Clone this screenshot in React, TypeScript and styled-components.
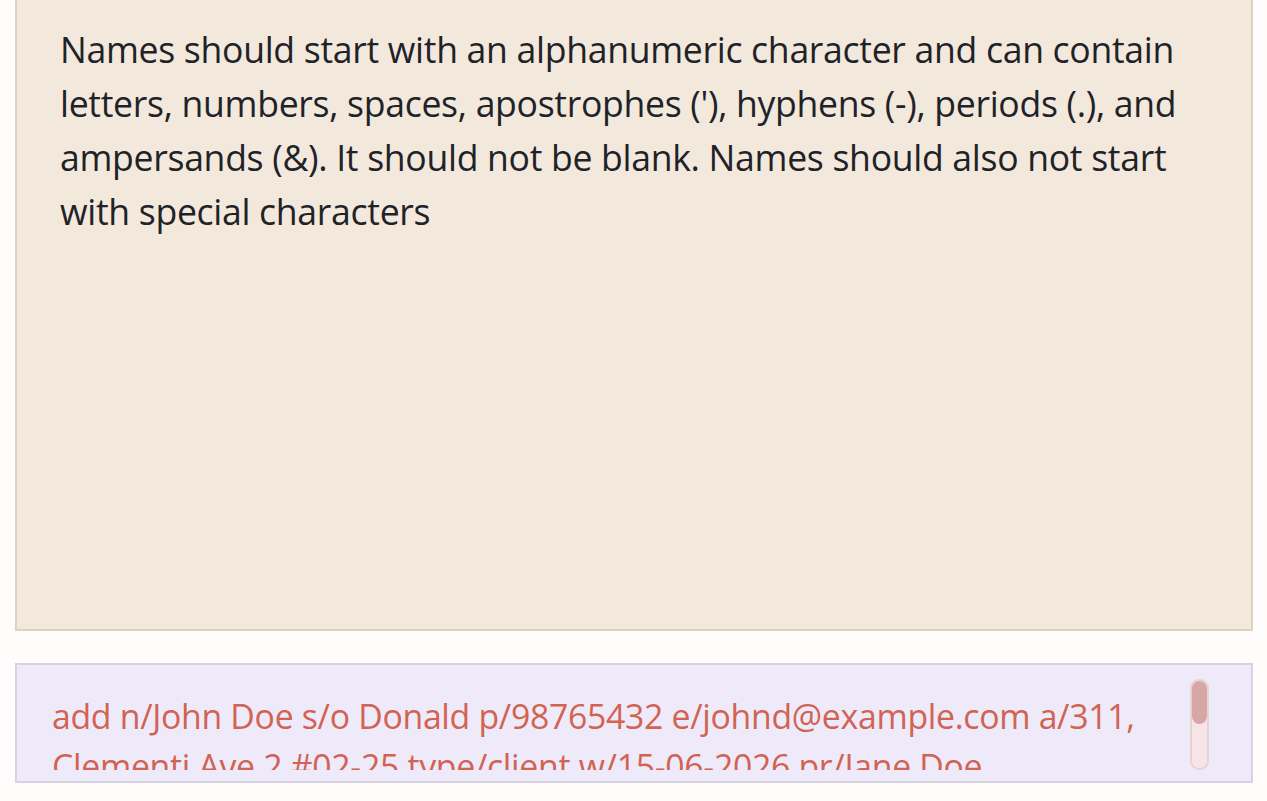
import React from "react";
import styled, { createGlobalStyle } from "styled-components";

const Global = createGlobalStyle`
  html, body { margin: 0; padding: 0; background: #fefdfc; }
  body { font-family: "Open Sans", "Noto Sans", sans-serif; }
`;

const Page = styled.div`
  width: 1267px;
  height: 801px;
  overflow: hidden;
  display: flex;
  flex-direction: column;
  padding: 0 14px 0 15px;
  box-sizing: border-box;
  gap: 32px;
`;

const ResultPanel = styled.div`
  height: 631px;
  flex-shrink: 0;
  box-sizing: border-box;
  background: #f3e8dc;
  border: 2px solid #ddd0c4;
  border-top: none;
  padding: 22px 30px 0 43px;
  color: #1f2328;
  font-size: 35.6px;
  line-height: 54px;
  letter-spacing: -0.3px;
`;

const CommandBox = styled.div`
  height: 120px;
  flex-shrink: 0;
  box-sizing: border-box;
  background: #efeafa;
  border: 2px solid #d6d2e2;
  display: flex;
  align-items: flex-start;
  padding: 14px 42px 10px 35px;
  gap: 36px;
`;

const CommandText = styled.div`
  flex: 1;
  height: 79px;
  margin-top: 12px;
  overflow: hidden;
  color: #d26352;
  font-size: 33.8px;
  line-height: 50px;
  letter-spacing: -0.3px;
`;

const ScrollTrack = styled.div`
  width: 15px;
  height: 87px;
  border-radius: 9px;
  background: #f7e4e6;
  border: 2px solid #e8d3d3;
  flex-shrink: 0;
`;

const ScrollThumb = styled.div`
  width: 15px;
  height: 43px;
  border-radius: 8px;
  background: #d7a7a7;
`;

export default function App() {
  return (
    <>
      <Global />
      <Page>
        <ResultPanel>
          Names should start with an alphanumeric character and can contain letters, numbers, spaces,
          apostrophes ('), hyphens (-), periods (.), and ampersands (&amp;). It should not be blank.
          Names should also not start with special characters
        </ResultPanel>
        <CommandBox>
          <CommandText>
            add n/John Doe s/o Donald p/98765432 e/johnd@example.com a/311, Clementi Ave 2 #02-25
            type/client w/15-06-2026 pr/Jane Doe
          </CommandText>
          <ScrollTrack>
            <ScrollThumb />
          </ScrollTrack>
        </CommandBox>
      </Page>
    </>
  );
}
